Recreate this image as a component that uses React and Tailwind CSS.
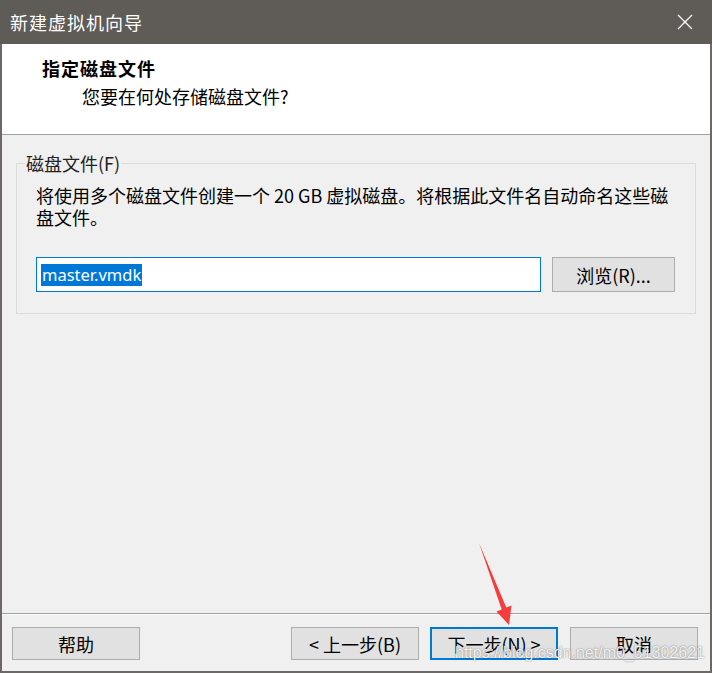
const cjk = { fontFamily: '"Noto Sans CJK SC", "Noto Sans", sans-serif' };

const WinButton = ({ children, primary, className = '' }) => (
  <button
    className={`h-[33px] w-[128px] flex items-center justify-center bg-[#e1e1e1] text-[18px] text-black leading-none ${
      primary ? 'border-2 border-[#0078d7]' : 'border border-[#adadad]'
    } ${className}`}
  >
    {children}
  </button>
);

const App = () => {
  return (
    <div className="relative w-[712px] h-[673px] overflow-hidden flex flex-col bg-[#f0f0f0]" style={cjk}>
      {/* title bar */}
      <div className="h-[44px] shrink-0 bg-[#5f5b57] flex items-center justify-between pl-[10px] pr-[19px]">
        <span className="text-white text-[18px] tracking-[1px]">新建虚拟机向导</span>
        <svg width="16" height="16" viewBox="0 0 16 16" className="text-white">
          <path d="M1 1 L15 15 M15 1 L1 15" stroke="currentColor" strokeWidth="1.3" fill="none" />
        </svg>
      </div>

      <div className="flex-1 flex flex-col border-x-2 border-b-2 border-[#6b6865]">
        {/* header */}
        <div className="h-[91px] shrink-0 bg-white border-b border-[#a0a0a0] pl-[40px] pt-[12px]">
          <p className="font-bold text-[18px] leading-[24px] tracking-[1px] text-black">指定磁盘文件</p>
          <p className="mt-[4px] pl-[40px] text-[18px] leading-[24px] text-black">您要在何处存储磁盘文件?</p>
        </div>

        {/* main */}
        <div className="flex-1 pt-[16px] px-[14px]">
          <fieldset className="border border-[#dcdcdc] pl-[8px] pr-[8px] pb-[21px]">
            <legend className="px-[1px] text-[18px] leading-[24px] text-[#222]">磁盘文件(F)</legend>
            <div className="px-[11px]">
              <p className="mt-[9px] text-[18px] leading-[22px] text-black whitespace-nowrap">
                将使用多个磁盘文件创建一个 20 GB 虚拟磁盘。将根据此文件名自动命名这些磁
                <br />
                盘文件。
              </p>
              <div className="mt-[29px] flex gap-[11px]">
                <div className="w-[505px] h-[35px] bg-white border border-[#0078d7] flex items-center pl-[4px]">
                  <span
                    className="bg-[#0078d7] text-white text-[16.5px] leading-[22px] px-[1px]"
                    style={{ fontFamily: '"Noto Sans", sans-serif' }}
                  >
                    master.vmdk
                  </span>
                </div>
                <button className="w-[123px] h-[35px] bg-[#e1e1e1] border border-[#adadad] text-[18px] text-black leading-none">
                  浏览(R)...
                </button>
              </div>
            </div>
          </fieldset>
        </div>

        {/* footer */}
        <div className="h-[58px] shrink-0 border-t border-[#a0a0a0] shadow-[inset_0_1px_0_#ffffff] pt-[13px] pl-[10px] pr-[12px] flex">
          <WinButton className="w-[127px]">帮助</WinButton>
          <div className="ml-auto flex gap-[11px]">
            <WinButton>&lt; 上一步(B)</WinButton>
            <WinButton primary>下一步(N) &gt;</WinButton>
            <WinButton className="ml-px">取消</WinButton>
          </div>
        </div>
      </div>

      {/* annotation arrow */}
      <svg className="absolute left-0 top-0 pointer-events-none" width="712" height="673">
        <polygon
          points="479,543 506.3,607.6 511.5,605.5 509,625 496.5,611.5 501.7,609.4"
          fill="#f63c3c"
        />
      </svg>

      {/* watermark */}
      <span
        className="absolute left-[455px] top-[643px] text-[16px] leading-[20px] text-white/90 [text-shadow:0_0_1.5px_rgba(0,0,0,0.6)] pointer-events-none"
        style={{ fontFamily: '"Liberation Sans", Arial, sans-serif' }}
      >
        https://blog.csdn.net/m0_51302621
      </span>
    </div>
  );
};

export default App;
